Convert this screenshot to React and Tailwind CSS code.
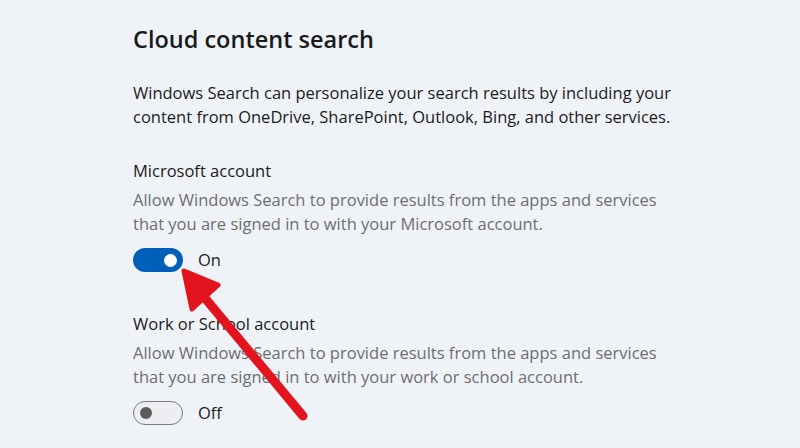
import React from "react";

function Toggle({ on }) {
  if (on) {
    return (
      <div className="w-[50px] h-[24px] rounded-full bg-[#005fb8] flex items-center justify-end pr-[6px]">
        <div className="w-[13px] h-[13px] rounded-full bg-white" />
      </div>
    );
  }
  return (
    <div className="w-[50px] h-[24px] rounded-full border border-[#7a7a7a] bg-[#eceef2] flex items-center pl-[6px]">
      <div className="w-[12px] h-[12px] rounded-full bg-[#5b5b5b]" />
    </div>
  );
}

function Section({ title, desc1, desc2, on }) {
  return (
    <div className="flex flex-col">
      <div className="text-[16.5px] leading-[24px] text-[#1b1b1b]">{title}</div>
      <div className="mt-[5px] text-[16.5px] leading-[24px] text-[#6e6e6e]">
        <div>{desc1}</div>
        <div>{desc2}</div>
      </div>
      <div className="mt-[12px] flex items-center gap-[15px]">
        <Toggle on={on} />
        <span className="text-[16.5px] text-[#1b1b1b]">{on ? "On" : "Off"}</span>
      </div>
    </div>
  );
}

export default function App() {
  return (
    <div
      className="relative w-[800px] h-[448px] overflow-hidden bg-[#eff3f8]"
      style={{ fontFamily: "'Open Sans', 'Noto Sans', sans-serif" }}
    >
      <div className="pl-[133px] pt-[23px] flex flex-col">
        <h1 className="text-[23.5px] leading-[32px] font-semibold text-[#1a1a1a]">Cloud content search</h1>
        <div className="mt-[26px] text-[16.5px] leading-[24px] text-[#1b1b1b]">
          <div>Windows Search can personalize your search results by including your</div>
          <div>content from OneDrive, SharePoint, Outlook, Bing, and other services.</div>
        </div>
        <div className="mt-[30px]">
          <Section
            title="Microsoft account"
            desc1="Allow Windows Search to provide results from the apps and services"
            desc2="that you are signed in to with your Microsoft account."
            on
          />
        </div>
        <div className="mt-[39px]">
          <Section
            title="Work or School account"
            desc1="Allow Windows Search to provide results from the apps and services"
            desc2="that you are signed in to with your work or school account."
            on={false}
          />
        </div>
      </div>
      <svg className="absolute inset-0 pointer-events-none" width="800" height="448" viewBox="0 0 800 448">
        <line x1="190" y1="280" x2="303" y2="416" stroke="#e3141d" strokeWidth="9" strokeLinecap="round" />
        <polygon points="184,271 218,285 192,309" fill="#e3141d" stroke="#e3141d" strokeWidth="5" strokeLinejoin="round" />
      </svg>
    </div>
  );
}
